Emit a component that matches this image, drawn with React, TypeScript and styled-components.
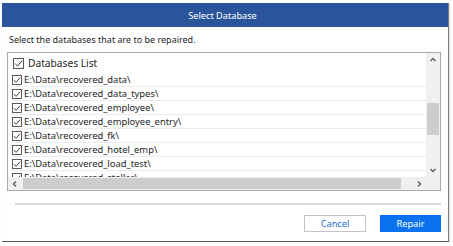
import { FC } from 'react';
import styled, { createGlobalStyle } from 'styled-components';

const GlobalStyle = createGlobalStyle`
  html, body {
    margin: 0;
    padding: 0;
    background: #ffffff;
  }

  body {
    font-family: 'Noto Sans', 'Open Sans', sans-serif;
    color: #1e1e1e;
  }
`;

const Page = styled.div`
  padding: 3px 0 0 2px;
`;

const Dialog = styled.div`
  width: 446px;
  height: 238px;
  background: #ffffff;
  border-right: 1px solid #7a7a7a;
  border-bottom: 1px solid #555555;
  box-shadow: 1px 1px 2px rgba(0, 0, 0, 0.15);
  display: flex;
  flex-direction: column;
`;

const TitleBar = styled.div`
  height: 24px;
  background: #2b559b;
  color: #ffffff;
  font-size: 9.2px;
  display: flex;
  align-items: center;
  justify-content: center;
  padding-right: 5px;
`;

const Body = styled.div`
  padding: 0 7px 0 5px;
  display: flex;
  flex-direction: column;
`;

const Instruction = styled.p`
  margin: 0;
  height: 25px;
  padding-left: 2px;
  font-size: 9px;
  line-height: 26px;
`;

const ListBox = styled.div`
  height: 137px;
  border: 1px solid #a9a9a9;
  display: grid;
  grid-template-columns: 1fr 14px;
  grid-template-rows: 1fr 13px;
`;

const Content = styled.div`
  overflow: hidden;
  padding-left: 4px;
`;

const HeaderRow = styled.div`
  height: 20px;
  display: flex;
  align-items: center;
  gap: 4px;
  padding-left: 1px;
  font-size: 10.2px;
`;

const Row = styled.div`
  height: 13px;
  border-bottom: 1px solid #ececec;
  display: flex;
  align-items: center;
  gap: 2px;
  font-size: 9.4px;
  white-space: nowrap;
`;

const Box = styled.svg`
  flex: none;
`;

const Track = styled.div<{ $vertical?: boolean }>`
  background: #f0f0f0;
  display: flex;
  flex-direction: ${({ $vertical }) => ($vertical ? 'column' : 'row')};
  align-items: stretch;
`;

const ArrowButton = styled.div`
  flex: none;
  width: 14px;
  height: 14px;
  display: flex;
  align-items: center;
  justify-content: center;
`;

const TrackSpace = styled.div<{ $vertical?: boolean }>`
  flex: 1;
  display: flex;
  flex-direction: ${({ $vertical }) => ($vertical ? 'column' : 'row')};
  padding: ${({ $vertical }) => ($vertical ? '0 1px' : '1px 0')};
`;

const Thumb = styled.div<{ $vertical?: boolean; $offset: number; $size: number }>`
  background: #cdcdcd;
  flex: none;
  ${({ $vertical, $offset, $size }) =>
    $vertical
      ? `margin-top: ${$offset}px; height: ${$size}px;`
      : `margin-left: ${$offset}px; width: ${$size}px;`}
`;

const Corner = styled.div`
  background: #f0f0f0;
`;

const Separator = styled.div`
  height: 2px;
  background: #dadada;
  margin: 12px 0 10px 8px;
`;

const Footer = styled.div`
  display: flex;
  justify-content: flex-end;
  gap: 14px;
`;

const Button = styled.button<{ $primary?: boolean }>`
  height: 17px;
  width: ${({ $primary }) => ($primary ? '61px' : '62px')};
  padding: 0;
  font-family: 'Noto Sans', 'Open Sans', sans-serif;
  font-size: 9.2px;
  cursor: pointer;
  display: flex;
  align-items: center;
  justify-content: center;
  background: ${({ $primary }) => ($primary ? '#0a72ee' : '#ffffff')};
  color: ${({ $primary }) => ($primary ? '#ffffff' : '#1a6fd6')};
  border: ${({ $primary }) => ($primary ? '1px solid #0a72ee' : '1px solid #c4c4c4')};
`;

const CheckBox: FC<{ size: number }> = ({ size }) => (
  <Box width={size} height={size} viewBox="0 0 10 10">
    <rect x="0.5" y="0.5" width="9" height="9" fill="#ffffff" stroke="#4a4a4a" strokeWidth="0.9" />
    <path d="M2 5.2 L4.1 7.3 L8.2 2.6" fill="none" stroke="#2a2a2a" strokeWidth="0.9" />
  </Box>
);

type Direction = 'up' | 'down' | 'left' | 'right';

const chevrons: Record<Direction, string> = {
  up: 'M1.5 5 L4 2.5 L6.5 5',
  down: 'M1.5 3 L4 5.5 L6.5 3',
  left: 'M5 1.5 L2.5 4 L5 6.5',
  right: 'M3 1.5 L5.5 4 L3 6.5',
};

const Arrow: FC<{ dir: Direction }> = ({ dir }) => (
  <ArrowButton>
    <svg width="8" height="8" viewBox="0 0 8 8">
      <path d={chevrons[dir]} fill="none" stroke="#5f5f5f" strokeWidth="1.4" />
    </svg>
  </ArrowButton>
);

const databases = [
  'E:\\Data\\recovered_data\\',
  'E:\\Data\\recovered_data_types\\',
  'E:\\Data\\recovered_employee\\',
  'E:\\Data\\recovered_employee_entry\\',
  'E:\\Data\\recovered_fk\\',
  'E:\\Data\\recovered_hotel_emp\\',
  'E:\\Data\\recovered_load_test\\',
  'E:\\Data\\recovered_stellar\\',
];

const App: FC = () => (
  <Page>
    <GlobalStyle />
    <Dialog>
      <TitleBar>Select Database</TitleBar>
      <Body>
        <Instruction>Select the databases that are to be repaired.</Instruction>
        <ListBox>
          <Content>
            <HeaderRow>
              <CheckBox size={11} />
              Databases List
            </HeaderRow>
            {databases.map((path) => (
              <Row key={path}>
                <CheckBox size={10} />
                {path}
              </Row>
            ))}
          </Content>
          <Track $vertical>
            <Arrow dir="up" />
            <TrackSpace $vertical>
              <Thumb $vertical $offset={36} $size={32} />
            </TrackSpace>
            <Arrow dir="down" />
          </Track>
          <Track>
            <Arrow dir="left" />
            <TrackSpace>
              <Thumb $offset={1} $size={378} />
            </TrackSpace>
            <Arrow dir="right" />
          </Track>
          <Corner />
        </ListBox>
        <Separator />
        <Footer>
          <Button>Cancel</Button>
          <Button $primary>Repair</Button>
        </Footer>
      </Body>
    </Dialog>
  </Page>
);

export default App;
